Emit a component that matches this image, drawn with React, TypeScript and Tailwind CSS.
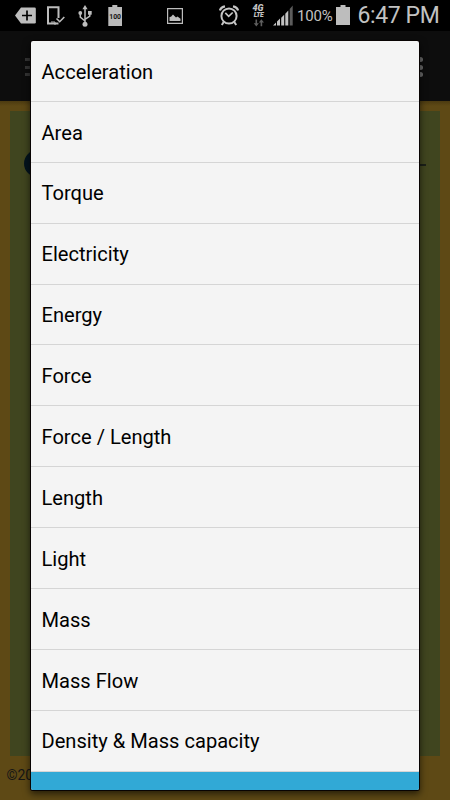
const CATEGORIES = [
  'Acceleration',
  'Area',
  'Torque',
  'Electricity',
  'Energy',
  'Force',
  'Force / Length',
  'Length',
  'Light',
  'Mass',
  'Mass Flow',
  'Density & Mass capacity',
]

function BackspaceIcon() {
  return (
    <svg className="ml-[15px] mt-[7px] h-[17px] w-[21px] shrink-0" viewBox="0 0 21 17">
      <path d="M6 .5h13.5a1.3 1.3 0 011.3 1.3v13.4a1.3 1.3 0 01-1.3 1.3H6L0 8.5z" fill="#bdbdbd" />
      <path d="M12 3.5v10M7 8.5h10" stroke="#000" strokeWidth="1.7" />
    </svg>
  )
}

function DeviceCheckIcon() {
  return (
    <svg className="ml-[11px] mt-1.5 h-[20px] w-[18px] shrink-0" viewBox="0 0 18 20" fill="none">
      <path d="M11.500 12V1.200H1V17.500h8" stroke="#bdbdbd" strokeWidth="2" />
      <path d="M4 16h4" stroke="#bdbdbd" strokeWidth="1" />
      <path d="M9.500 12.500l3.200 3.200L17.300 11" stroke="#bdbdbd" strokeWidth="1.6" />
      <path d="M7 17.500h4.500" stroke="#bdbdbd" strokeWidth="2" />
    </svg>
  )
}

function UsbIcon() {
  return (
    <svg className="ml-[13px] mt-[5px] h-[22px] w-[14px] shrink-0" viewBox="0 0 14 22" fill="none">
      <path d="M7 3v16M2.3 9v3.2L7 16M11.8 8v3.2L7 14.4" stroke="#bdbdbd" strokeWidth="1.5" />
      <path d="M7 0l2.6 4.2H4.4z" fill="#bdbdbd" />
      <circle cx="2.3" cy="8" r="1.9" fill="#bdbdbd" />
      <path d="M10 6h3.7v3.7H10z" fill="#bdbdbd" />
      <circle cx="7" cy="19.3" r="2.5" fill="#bdbdbd" />
    </svg>
  )
}

function BatteryLevelIcon() {
  return (
    <svg className="ml-4 mt-[5px] h-[21px] w-[14px] shrink-0 opacity-99" viewBox="0 0 14 21">
      <path d="M4.3 0h5v2H14v19H.3V2h4z" fill="#bdbdbd" />
      <text x="7.1" y="13.5" textAnchor="middle" fontFamily="Roboto, sans-serif" fontSize="6.8" fontWeight="700" fill="#111">
        100
      </text>
    </svg>
  )
}

function PictureIcon() {
  return (
    <svg className="ml-[45px] mt-2 h-[16px] w-[16px] shrink-0" viewBox="0 0 16 16">
      <path d="M.6.6h14.8v14.8H.6z" fill="none" stroke="#bdbdbd" strokeWidth="1.2" />
      <path d="M2.5 13V9l1.500-.3 2-2.200 3 3 1.500-1 3 2.200V13z" fill="#bdbdbd" />
    </svg>
  )
}

function AlarmIcon() {
  return (
    <svg className="ml-[36px] mt-[5px] h-[21px] w-[20px] shrink-0" viewBox="0 0 20 21" fill="none" stroke="#c6c6c6">
      <circle cx="10" cy="11" r="7.600" strokeWidth="2" />
      <path d="M.9 5.500Q1.800 2 6 1.300M19.100 5.500Q18.200 2 14 1.300" strokeWidth="2.200" />
      <path d="M6.300 7.900l3.400 3.400 4-3.800" strokeWidth="1.700" />
      <path d="M4.700 17L2.800 20M15.300 17l1.900 3" strokeWidth="2" />
    </svg>
  )
}

function LteIcon() {
  return (
    <svg className="ml-3 mt-1 h-[23px] w-[15px] shrink-0 opacity-99" viewBox="0 0 15 23" fill="#c6c6c6">
      <text fontFamily="Roboto, sans-serif" fontWeight="900" fontStyle="italic">
        <tspan x="1.500" y="7" fontSize="9">4G</tspan>
        <tspan x="2.800" y="13.200" fontSize="6.800" letterSpacing="-0.4">LTE</tspan>
      </text>
      <path d="M4.500 15.500h1.600v3.700h1.800l-2.600 3.200-2.600-3.200h1.800zM9.600 22.200h1.600v-3.700H13l-2.600-3.200-2.600 3.200h1.800z" fill="#606060" />
    </svg>
  )
}

function SignalIcon() {
  return (
    <svg className="ml-[7px] mt-[5px] h-[21px] w-[20px] shrink-0" viewBox="0 0 20 21" fill="#c2c2c2">
      <path d="M0 20.500l3-3v3zM4 16.500l3-3v7H4zM8.200 12.700l3-3v10.800h-3zM12.300 8.700l3-3.200v15h-3z" />
      <path d="M16.700 4l3-3.500v20h-3z" fill="#5c5c5c" />
    </svg>
  )
}

function StatusBar() {
  return (
    <div className="flex h-[31px] items-start bg-black text-[#c2c2c2]">
      <BackspaceIcon />
      <DeviceCheckIcon />
      <UsbIcon />
      <BatteryLevelIcon />
      <PictureIcon />
      <AlarmIcon />
      <LteIcon />
      <SignalIcon />
      <span className="ml-[4px] mt-[6px] w-[39px] shrink-0 whitespace-nowrap text-[15px] leading-[20px] tracking-[-0.2px]">100%</span>
      <svg className="mt-[5px] h-[20px] w-[14px] shrink-0" viewBox="0 0 14 20">
        <path d="M4.500 0h5v2H14v18H0V2h4.500z" fill="#bdbdbd" />
      </svg>
      <span className="ml-[7.500px] shrink-0 whitespace-nowrap text-[23px] leading-[31px] tracking-[-0.4px]">6:47 PM</span>
    </div>
  )
}

// dimmed screen behind the dropdown
function Backdrop() {
  return (
    <>
      <div className="flex h-[70px] items-start justify-between bg-[#0d0d0d] pl-[25px] pr-[27px] pt-[26px]">
        <div className="mt-px flex flex-col gap-[4.500px]">
          <div className="h-[3px] w-4 bg-[#353535]" />
          <div className="h-[3px] w-4 bg-[#353535]" />
          <div className="h-[3px] w-4 bg-[#353535]" />
        </div>
        <div className="flex flex-col gap-[2.500px]">
          <div className="size-[5px] rounded-full bg-[#696969]" />
          <div className="size-[5px] rounded-full bg-[#696969]" />
          <div className="size-[5px] rounded-full bg-[#696969]" />
        </div>
      </div>
      <div className="h-[10px] bg-linear-to-b from-[#4b3a10] to-[#5e4915] to-50%" />
      <div className="mx-[10px] flex h-[645px] items-start justify-between bg-[#40451f] pl-[14px] pr-[14px] pt-[39px]">
        <div className="size-[27px] rounded-full bg-[#03131d]" />
        <div className="mt-[14px] h-[2px] w-[18px] bg-[#1b2018]" />
      </div>
      <p className="ml-[6.500px] mt-[9px] text-[14px] leading-[20px] text-[#151515]">©2014</p>
    </>
  )
}

function CategoryList() {
  return (
    <div className="absolute left-[31px] top-[41px] h-[749px] w-[388px] overflow-hidden rounded-[2px] bg-[#f4f4f4]">
      <ul>
        {CATEGORIES.map((name) => (
          <li key={name} className="flex h-[60.900px] items-center border-b border-[#d5d5d5] pl-[10.500px] pt-[1.500px] text-[20.100px] leading-[28px] text-black">
            {name}
          </li>
        ))}
      </ul>
      <div className="h-[30px] bg-[#31a9d6]" />
    </div>
  )
}

export default function App() {
  return (
    <div className="relative h-[800px] w-[450px] overflow-hidden bg-[#5e4915] font-['Roboto',sans-serif] antialiased">
      <StatusBar />
      <Backdrop />
      <div className="absolute left-[30px] top-[40px] h-[751px] w-[390px] rounded-[3px] bg-[#080302] shadow-[0_3px_7px_rgba(0,0,0,0.6)]" />
      <CategoryList />
    </div>
  )
}
